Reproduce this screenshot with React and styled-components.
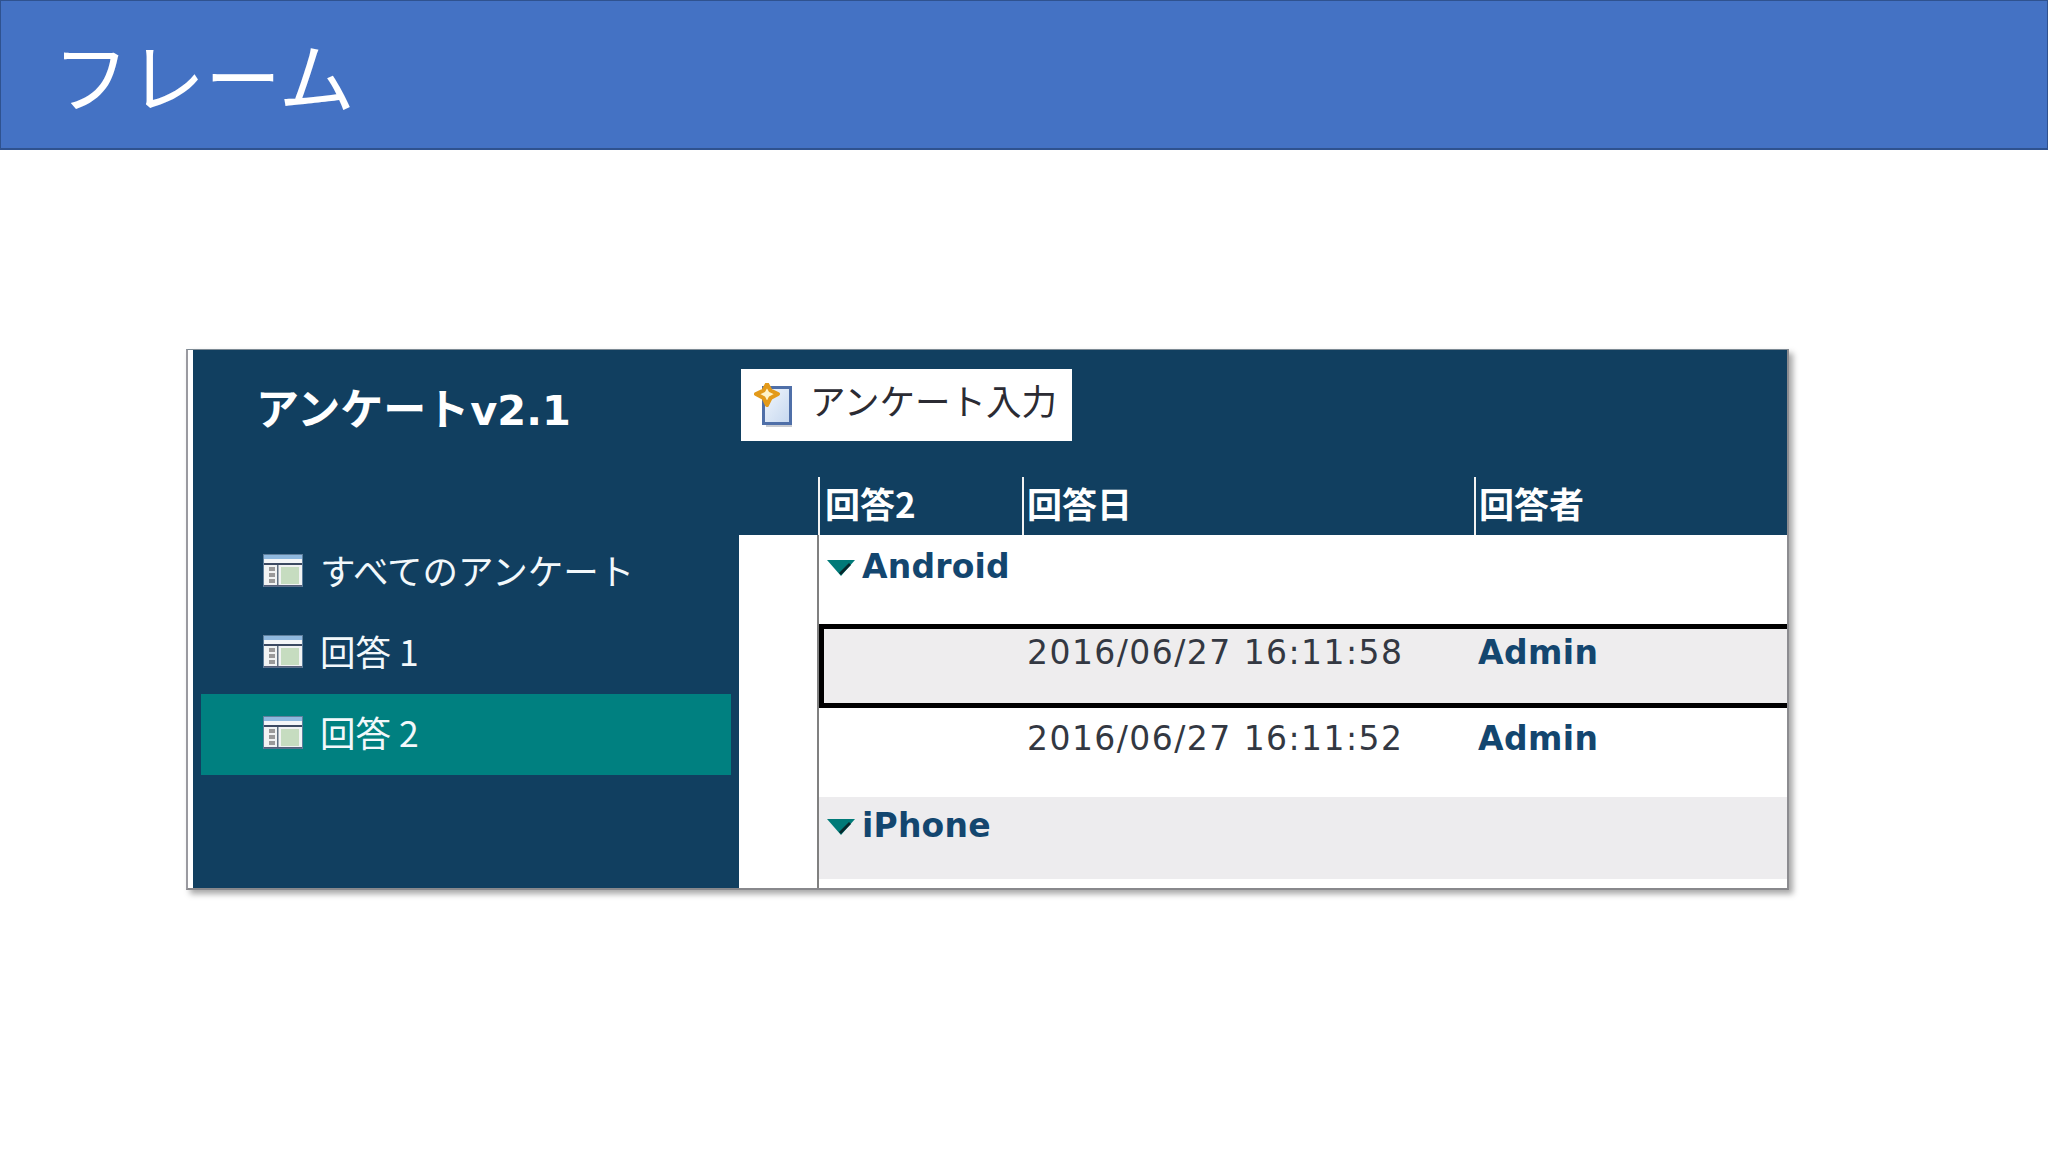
import React from "react";
import styled, { createGlobalStyle } from "styled-components";

const JP = `"Noto Sans CJK JP", "Noto Sans", sans-serif`;
const LATIN = `"DejaVu Sans", "Noto Sans CJK JP", sans-serif`;
const NAVY = "#113f60";
const TEXT_NAVY = "#13466f";

const Global = createGlobalStyle`
  html, body { margin: 0; padding: 0; background: #fff; }
  * { box-sizing: border-box; }
`;

const Slide = styled.div`
  width: 2048px;
  height: 1152px;
  overflow: hidden;
  background: #fff;
  display: flex;
  flex-direction: column;
`;

const TitleBar = styled.header`
  height: 150px;
  background: #4472c4;
  border: 1px solid #2f528f;
  border-bottom-width: 2px;
  padding: 0 0 0 52px;
  display: flex;
  align-items: center;
`;

const SlideTitle = styled.h1`
  margin: 0 0 1px;
  font: 400 76px/1 ${JP};
  color: #fff;
`;

const Stage = styled.main`
  flex: 1;
  padding: 199px 0 0 186px;
`;

const Frame = styled.section`
  width: 1603px;
  height: 541px;
  display: flex;
  background: ${NAVY};
  border-left: 2px solid #9a9aa0;
  border-right: 2px solid #8c8c90;
  border-bottom: 2px solid #88888c;
  border-top: 1px solid #7d8a94;
  box-shadow: 4px 4px 6px rgba(0, 0, 0, 0.35);
`;

const LeftGap = styled.div`
  width: 5px;
  background: #fff;
  flex: none;
`;

const Sidebar = styled.aside`
  width: 546px;
  flex: none;
  background: ${NAVY};
  padding: 0 8px;
  display: flex;
  flex-direction: column;
`;

const Brand = styled.div`
  height: 182px;
  padding: 33px 0 0 55px;
  color: #fff;
  white-space: nowrap;
  display: flex;
  align-items: baseline;
`;

const BrandVersion = styled.span`
  font: 700 41.5px/1.1 ${LATIN};
  margin-left: 1px;
`;

const BrandKana = styled.span`
  font: 700 43px/1.1 ${JP};
`;

const NavItem = styled.div`
  height: 81px;
  padding: 0 0 5px 62px;
  display: flex;
  align-items: center;
  gap: 17px;
  color: #f2f8fb;
  background: ${(p) => (p.$active ? "#008080" : "transparent")};
  font: 400 35.5px/1 ${JP};
  white-space: nowrap;
`;

const Content = styled.div`
  flex: 1;
  display: flex;
  flex-direction: column;
  min-width: 0;
`;

const Toolbar = styled.div`
  height: 127px;
  background: ${NAVY};
  padding: 19px 0 0 2px;
`;

const NewButton = styled.div`
  width: 331px;
  height: 72px;
  background: #fff;
  display: flex;
  align-items: center;
  gap: 14px;
  padding: 0 0 10px 13px;
  font: 400 35.5px/1 ${JP};
  color: #2b2b33;
  white-space: nowrap;
`;

const cols = "79px 204px 452px 1fr";

const HeaderRow = styled.div`
  height: 58px;
  display: grid;
  grid-template-columns: ${cols};
  background: ${NAVY};
`;

const HeaderCell = styled.div`
  border-left: ${(p) => (p.$blank ? "none" : "2px solid #f2f2f2")};
  padding: 6px 0 0 ${(p) => p.$pad ?? 3}px;
  font: 700 35px/40px ${JP};
  color: #fff;
  white-space: nowrap;
`;

const TableBody = styled.div`
  flex: 1;
  display: flex;
  background: #fff;
`;

const Gutter = styled.div`
  width: 78px;
`;

const Rows = styled.div`
  flex: 1;
  border-left: 2px solid #808080;
  display: flex;
  flex-direction: column;
`;

const GroupRow = styled.div`
  height: ${(p) => p.$h}px;
  background: ${(p) => (p.$shade ? "#edecee" : "#fff")};
  padding: ${(p) => p.$top}px 0 0 8px;
  display: flex;
  align-items: flex-start;
  gap: 7px;
  font: 700 33px/40px ${LATIN};
  letter-spacing: 0.2px;
  color: ${TEXT_NAVY};
`;

const Caret = styled.svg`
  width: 28px;
  height: 16px;
  margin-top: 13px;
  flex: none;
`;

const DataRow = styled.div`
  height: ${(p) => p.$h}px;
  display: grid;
  grid-template-columns: 203px 451px 1fr;
  border: 5px solid ${(p) => (p.$selected ? "#000" : "transparent")};
  border-right: 0;
  background: ${(p) => (p.$selected ? "#eeedee" : "#fff")};
  padding-top: ${(p) => p.$top}px;
`;

const DateCell = styled.div`
  grid-column: 2;
  font: 400 33px/40px ${LATIN};
  letter-spacing: 1.45px;
  color: #333842;
  white-space: nowrap;
`;

const UserCell = styled.div`
  font: 700 33px/40px ${LATIN};
  letter-spacing: 0.4px;
  color: ${TEXT_NAVY};
`;

const TableIcon = () => (
  <svg width="40" height="33" viewBox="0 0 40 33" style={{ flex: "none" }}>
    <rect x="0.5" y="0.5" width="39" height="32" fill="#f1f3f3" stroke="#5f7f9c" />
    <rect x="1" y="1" width="38" height="4" fill="#8fb8de" />
    <rect x="2" y="5" width="36" height="4" fill="#f4f6f8" />
    <rect x="1" y="9" width="38" height="2" fill="#3c4a62" />
    <rect x="6" y="13" width="6" height="4" fill="#9a9a9a" />
    <rect x="6" y="19" width="6" height="4" fill="#9a9a9a" />
    <rect x="6" y="25" width="6" height="4" fill="#9a9a9a" />
    <rect x="14" y="11" width="1.5" height="21" fill="#5f6f80" />
    <rect x="18" y="13" width="18" height="17" fill="#c6dcc0" />
    <rect x="1" y="31" width="38" height="1.5" fill="#56607a" />
  </svg>
);

const NewIcon = () => (
  <svg width="42" height="44" viewBox="0 0 42 44" style={{ flex: "none", marginTop: 10 }}>
    <defs>
      <linearGradient id="pg" x1="0" y1="0" x2="1" y2="1">
        <stop offset="0" stopColor="#f2f7fd" />
        <stop offset="1" stopColor="#c5d7ef" />
      </linearGradient>
    </defs>
    <rect x="12" y="9" width="26" height="35" fill="#c9ccd2" />
    <rect x="9.5" y="4.5" width="27" height="36" fill="url(#pg)" stroke="#4f6fa8" strokeWidth="3" />
    <path
      d="M13 1 L16.5 7.5 L24 11 L16.5 15 L13 22 L9.5 15 L2 11 L9.5 7.5 Z"
      fill="#fff3c8"
      stroke="#e39a1a"
      strokeWidth="4"
      strokeLinejoin="round"
    />
  </svg>
);

const CaretIcon = () => (
  <Caret viewBox="0 0 28 16">
    <polygon points="0,0 28,0 14,16" fill="#007a78" />
    <polygon points="22,3 24,5 14,15 12,13" fill="#06282c" />
  </Caret>
);

export default function App() {
  return (
    <Slide>
      <Global />
      <TitleBar>
        <SlideTitle>フレーム</SlideTitle>
      </TitleBar>
      <Stage>
        <Frame>
          <LeftGap />
          <Sidebar>
            <Brand>
              <BrandKana>アンケート</BrandKana>
              <BrandVersion>v2.1</BrandVersion>
            </Brand>
            <NavItem>
              <TableIcon />
              すべてのアンケート
            </NavItem>
            <NavItem>
              <TableIcon />
              回答 1
            </NavItem>
            <NavItem $active>
              <TableIcon />
              回答 2
            </NavItem>
          </Sidebar>
          <Content>
            <Toolbar>
              <NewButton>
                <NewIcon />
                アンケート入力
              </NewButton>
            </Toolbar>
            <HeaderRow>
              <HeaderCell $blank />
              <HeaderCell $pad={5}>回答2</HeaderCell>
              <HeaderCell>回答日</HeaderCell>
              <HeaderCell>回答者</HeaderCell>
            </HeaderRow>
            <TableBody>
              <Gutter />
              <Rows>
                <GroupRow $h={89} $top={12}>
                  <CaretIcon />
                  Android
                </GroupRow>
                <DataRow $selected $h={84} $top={4}>
                  <DateCell>2016/06/27 16:11:58</DateCell>
                  <UserCell>Admin</UserCell>
                </DataRow>
                <DataRow $h={89} $top={6}>
                  <DateCell>2016/06/27 16:11:52</DateCell>
                  <UserCell>Admin</UserCell>
                </DataRow>
                <GroupRow $shade $h={82} $top={9}>
                  <CaretIcon />
                  iPhone
                </GroupRow>
              </Rows>
            </TableBody>
          </Content>
        </Frame>
      </Stage>
    </Slide>
  );
}
